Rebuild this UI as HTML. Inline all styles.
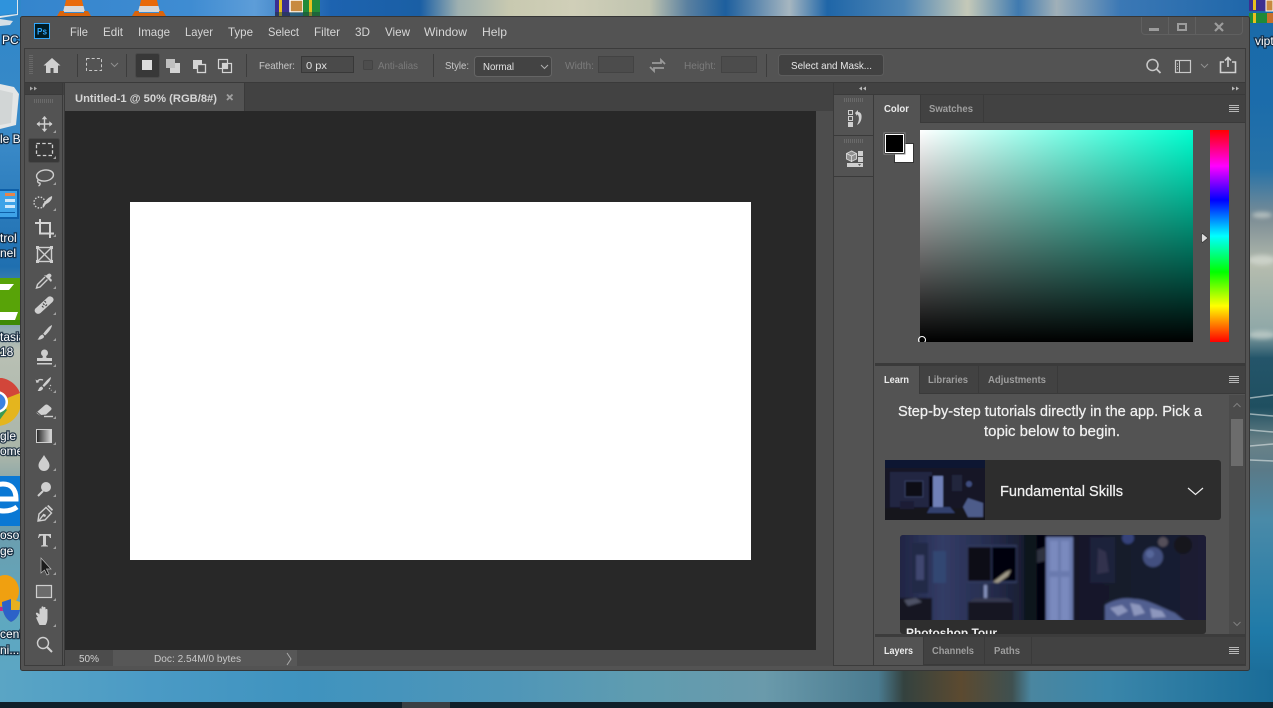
<!DOCTYPE html>
<html><head><meta charset="utf-8"><title>Photoshop</title>
<style>
html,body{margin:0;padding:0;background:#1a6aa8;overflow:hidden;width:1273px;height:708px}
svg{display:block;font-family:"Liberation Sans",sans-serif}
.m{font-size:12px;fill:#d6d6d6}
.o{font-size:10.5px;fill:#c8c8c8}
.d{font-size:10.5px;fill:#7b7b7b}
.ta{font-size:10px;font-weight:bold;fill:#ececec}
.ti{font-size:10px;font-weight:bold;fill:#9e9e9e}
.dt{font-size:12px;fill:#fff;paint-order:stroke;stroke:#10243a;stroke-width:2.500px;stroke-opacity:.85}
.lt{font-size:15px;fill:#f0f0f0;stroke:#f0f0f0;stroke-width:.25px}
.i{fill:none;stroke:#cfcfcf;stroke-width:1.4}
.f{fill:#cfcfcf}
.l{stroke:#3a3a3a;stroke-width:1}
</style></head><body>
<svg width="1273" height="708" viewBox="0 0 1273 708" xmlns="http://www.w3.org/2000/svg">
<defs>
<linearGradient id="gt"><stop offset="0" stop-color="#3384cc"/><stop offset=".15" stop-color="#3f8cd2"/><stop offset=".2" stop-color="#5d9dd8"/><stop offset=".26" stop-color="#1d63b0"/><stop offset=".33" stop-color="#1a5fa5"/><stop offset=".36" stop-color="#9eb0b0"/><stop offset=".4" stop-color="#c8c9b0"/><stop offset=".45" stop-color="#d0cfb8"/><stop offset=".51" stop-color="#c0c4b0"/><stop offset=".54" stop-color="#5a80a0"/><stop offset=".57" stop-color="#1d5f9e"/><stop offset=".62" stop-color="#a6b6c0"/><stop offset=".65" stop-color="#1f66a8"/><stop offset=".71" stop-color="#4f86b5"/><stop offset=".76" stop-color="#c5c9b8"/><stop offset=".8" stop-color="#3f7ab0"/><stop offset=".83" stop-color="#a0b0b8"/><stop offset=".88" stop-color="#3b78b5"/><stop offset="1" stop-color="#1a64a8"/></linearGradient>
<linearGradient id="gb"><stop offset="0" stop-color="#5aa5c5"/><stop offset=".12" stop-color="#4a9ac5"/><stop offset=".24" stop-color="#3f93bf"/><stop offset=".4" stop-color="#4f96b8"/><stop offset=".5" stop-color="#5f9cb0"/><stop offset=".6" stop-color="#6a9aab"/><stop offset=".69" stop-color="#4a7b90"/><stop offset=".71" stop-color="#34423f"/><stop offset=".755" stop-color="#5c4a30"/><stop offset=".795" stop-color="#3f5050"/><stop offset=".81" stop-color="#4a86a0"/><stop offset=".87" stop-color="#3a86aa"/><stop offset="1" stop-color="#1a6c98"/></linearGradient>
<linearGradient id="gr" x2="0" y2="1"><stop offset="0" stop-color="#1a6aa8"/><stop offset=".14" stop-color="#1b6cab"/><stop offset=".24" stop-color="#2672a8"/><stop offset=".31" stop-color="#7c8d95"/><stop offset=".38" stop-color="#b5bcae"/><stop offset=".47" stop-color="#8fa8a8"/><stop offset=".51" stop-color="#24556a"/><stop offset=".58" stop-color="#1f4f60"/><stop offset=".63" stop-color="#6a8288"/><stop offset=".67" stop-color="#5a7a88"/><stop offset=".74" stop-color="#4a8aa8"/><stop offset=".9" stop-color="#1f7aa8"/><stop offset="1" stop-color="#1a6590"/></linearGradient>
<linearGradient id="gl" x2="0" y2="1"><stop offset="0" stop-color="#2f87c9"/><stop offset=".2" stop-color="#3a8ac8"/><stop offset=".38" stop-color="#1f6fb0"/><stop offset=".5" stop-color="#b9c0b4"/><stop offset=".65" stop-color="#a9b5a9"/><stop offset=".72" stop-color="#6f9aa8"/><stop offset=".88" stop-color="#5fa8c0"/><stop offset="1" stop-color="#5aa5c5"/></linearGradient>
<linearGradient id="hue" x2="0" y2="1"><stop offset="0" stop-color="#f00"/><stop offset=".17" stop-color="#f0f"/><stop offset=".33" stop-color="#00f"/><stop offset=".5" stop-color="#0ff"/><stop offset=".67" stop-color="#0f0"/><stop offset=".83" stop-color="#ff0"/><stop offset="1" stop-color="#f00"/></linearGradient>
<linearGradient id="p1"><stop offset="0" stop-color="#fff"/><stop offset="1" stop-color="#00ffd0"/></linearGradient>
<linearGradient id="p2" x2="0" y2="1"><stop offset="0" stop-color="#000" stop-opacity="0"/><stop offset=".5" stop-color="#000" stop-opacity=".5"/><stop offset="1" stop-color="#000"/></linearGradient>
<linearGradient id="grd"><stop offset="0" stop-color="#222"/><stop offset="1" stop-color="#ddd"/></linearGradient>
<linearGradient id="wall"><stop offset="0" stop-color="#1e2340"/><stop offset=".15" stop-color="#333c66"/><stop offset=".3" stop-color="#262d4e"/><stop offset=".45" stop-color="#131726"/><stop offset=".7" stop-color="#171a2b"/><stop offset="1" stop-color="#1b2035"/></linearGradient>
<filter id="s1" x="-5%" y="-5%" width="110%" height="110%"><feGaussianBlur stdDeviation="1"/></filter>
<filter id="s2" x="-20%" y="-20%" width="140%" height="140%"><feGaussianBlur stdDeviation=".8"/></filter>
<filter id="s3" x="-50%" y="-50%" width="200%" height="200%"><feGaussianBlur stdDeviation="2"/></filter>
<clipPath id="cb"><rect x="900" y="535" width="306" height="99" rx="3"/></clipPath>
<clipPath id="ct"><rect x="885" y="460" width="100" height="60"/></clipPath>
</defs>

<!-- desktop -->
<rect width="1273" height="708" fill="#3a86aa"/>
<rect x="0" y="0" width="1273" height="17" fill="url(#gt)"/>
<rect x="0" y="0" width="21" height="702" fill="url(#gl)"/>
<rect x="1249" y="0" width="24" height="702" fill="url(#gr)"/>
<rect x="0" y="670" width="1273" height="32" fill="url(#gb)"/>
<g filter="url(#s3)" fill="#e4e8e0" opacity=".55">
<ellipse cx="1262" cy="215" rx="10" ry="3"/><ellipse cx="1262" cy="260" rx="14" ry="5"/><ellipse cx="1262" cy="335" rx="14" ry="4"/>
</g>
<path d="M1250 398l23-3M1250 414l23 2M1250 430l23 2M1250 446l23-2M1250 460l23 1" stroke="#dfe6e6" stroke-width="1.500" opacity=".6" fill="none"/>
<rect x="0" y="702" width="1273" height="6" fill="#10202a"/>
<rect x="402" y="702" width="48" height="6" fill="#3a4044"/>

<!-- top icons -->
<path d="M66 0h16l2 9H64z" fill="#e96a0a"/><path d="M64.500 6h19l1.500 6H63z" fill="#d8d8d8"/><path d="M57 16l3-5h4v2h20v-2h4l3 5z" fill="#d9640c"/>
<path d="M141 0h16l2 9h-20z" fill="#e96a0a"/><path d="M139.500 6h19l1.500 6h-22z" fill="#d8d8d8"/><path d="M132 16l3-5h4v2h20v-2h4l3 5z" fill="#d9640c"/>
<rect x="275" y="0" width="15" height="16" fill="#3c2f90"/><rect x="279" y="0" width="3" height="16" fill="#e8c020"/><rect x="290" y="0" width="13" height="12" fill="#c88a40" stroke="#fff" stroke-width="1.500"/><rect x="303" y="0" width="17" height="16" fill="#228a3a"/><rect x="309" y="0" width="3" height="16" fill="#e8c020"/><rect x="275" y="12" width="45" height="4" fill="#1a3f3a" opacity=".5"/>
<!-- left icons -->
<path d="M0 0h17v13L0 15z" fill="#2f93dc"/><path d="M17 0v14L0 16v2l18-3V0z" fill="#dfe7ec"/><path d="M0 19l13 2-3 4-10 1z" fill="#d5dfe6"/>
<text class="dt" x="2" y="44">PC</text>
<path d="M0 84l14 3 5 7-3 31-16 4z" fill="#e4e6e6"/><path d="M0 90l13 3-2 30-11 2z" fill="#d2d6d6"/>
<text class="dt" x="0" y="143">le Bi</text>
<rect x="-2" y="189" width="21" height="30" fill="#0e5fa8"/><rect x="0" y="191" width="17" height="26" fill="#3ea3e8"/><rect x="5" y="193" width="10" height="3" fill="#e8854a"/><rect x="5" y="199" width="10" height="3" fill="#cfe8fa"/><rect x="5" y="205" width="10" height="3" fill="#cfe8fa"/><rect x="0" y="212" width="15" height="1" fill="#0e5fa8"/>
<text class="dt" x="0" y="242">trol</text>
<text class="dt" x="0" y="257">nel</text>
<rect x="0" y="278" width="21" height="47" fill="#58a308"/><path d="M0 284h14l-5 6H0zM0 312h18l-3 8H0z" fill="#fff"/><rect x="0" y="320" width="21" height="5" fill="#3f8a08"/>
<text class="dt" x="0" y="341">tasia</text>
<text class="dt" x="0" y="356">18</text>
<circle cx="-3" cy="402" r="24" fill="#e4b51e"/><path d="M-3 402L-20 378h22A24 24 0 0 1 20 393z" fill="#d2463a"/><path d="M-3 402l10 8-12 16-8-2z" fill="#3a9a52"/><circle cx="-3" cy="402" r="11" fill="#fff"/><circle cx="-3" cy="402" r="8.500" fill="#3b82e0"/>
<text class="dt" x="0" y="440">gle</text>
<text class="dt" x="0" y="455">ome</text>
<rect x="0" y="476" width="21" height="50" fill="#0a78d4"/>
<path d="M-10 499H16C16 488 10 484 3 484C-6 484-11 490-11 498C-11 507-4 511 4 511C9 511 13 510 17 507" fill="none" stroke="#fff" stroke-width="5"/>
<text class="dt" x="0" y="539">osof</text>
<text class="dt" x="0" y="555">ge</text>
<ellipse cx="5" cy="591" rx="14" ry="16" fill="#f0a010"/><path d="M-2 607h20v4H0z" fill="#c62888"/><path d="M2 602l9-3 9 3c0 10-3 17-9 20-6-3-9-10-9-20z" fill="#e8b020"/><path d="M11 599v23c-6-3-9-10-9-20zM11 610h9c-1 5-4 10-9 12z" fill="#2c62c8"/>
<text class="dt" x="0" y="638">cent</text>
<text class="dt" x="0" y="654">ni...</text>
<!-- right icons -->
<rect x="1249" y="0" width="24" height="11" fill="#3c2f90"/><rect x="1249" y="13" width="24" height="10" fill="#1f8a38"/><rect x="1253" y="0" width="3" height="10" fill="#e8c020"/><rect x="1253" y="13" width="3" height="10" fill="#e8c020"/><rect x="1266" y="0" width="7" height="11" fill="#c88a40" stroke="#fff"/><rect x="1267" y="13" width="6" height="10" fill="#c8702a"/>
<text class="dt" x="1255" y="45">vipt</text>

<!-- window -->
<rect x="20.500" y="16.500" width="1229" height="654" rx="2" fill="#535353" stroke="#363636"/>
<rect x="24.500" y="48.500" width="1221" height="617" fill="#535353" stroke="#3c3c3c"/>
<rect x="25" y="83" width="1220" height="12" fill="#424242"/>
<line class="l" x1="25" x2="1245" y1="82.500" y2="82.500"/>

<!-- ps logo -->
<rect x="34.500" y="23.500" width="15" height="15" fill="#001d26" stroke="#31a8ff"/>
<text x="37" y="34.500" font-size="9" font-weight="bold" fill="#31a8ff" textLength="10" lengthAdjust="spacingAndGlyphs">Ps</text>

<!-- menu -->
<text class="m" x="70" y="36" textLength="18" lengthAdjust="spacingAndGlyphs">File</text>
<text class="m" x="103" y="36" textLength="20" lengthAdjust="spacingAndGlyphs">Edit</text>
<text class="m" x="138" y="36" textLength="32" lengthAdjust="spacingAndGlyphs">Image</text>
<text class="m" x="185" y="36" textLength="28" lengthAdjust="spacingAndGlyphs">Layer</text>
<text class="m" x="228" y="36" textLength="25" lengthAdjust="spacingAndGlyphs">Type</text>
<text class="m" x="268" y="36" textLength="31" lengthAdjust="spacingAndGlyphs">Select</text>
<text class="m" x="314" y="36" textLength="26" lengthAdjust="spacingAndGlyphs">Filter</text>
<text class="m" x="355" y="36" textLength="15" lengthAdjust="spacingAndGlyphs">3D</text>
<text class="m" x="385" y="36" textLength="25" lengthAdjust="spacingAndGlyphs">View</text>
<text class="m" x="424" y="36" textLength="43" lengthAdjust="spacingAndGlyphs">Window</text>
<text class="m" x="482" y="36" textLength="25" lengthAdjust="spacingAndGlyphs">Help</text>

<!-- window controls -->
<path d="M1141.500 17v14a3.500 3.500 0 0 0 3.500 3.500h94a3.500 3.500 0 0 0 3.500-3.500V17M1168.500 17v18M1195.500 17v18" fill="none" stroke="#606060"/>
<rect x="1149" y="28" width="10" height="3" fill="#9c9c9c"/>
<rect x="1178" y="24" width="8" height="6" fill="none" stroke="#9c9c9c" stroke-width="2"/>
<path d="M1215 23l8 8M1223 23l-8 8" stroke="#9c9c9c" stroke-width="2.200" fill="none"/>

<!-- options bar -->
<path d="M29 55.500h4M29 57.500h4M29 59.500h4M29 61.500h4M29 63.500h4M29 65.500h4M29 67.500h4M29 69.500h4M29 71.500h4M29 73.500h4" stroke="#686868" stroke-width="1"/>
<path d="M52 58l-8.500 7.500h2.500V73h4.500v-5h3v5H58v-7.500h2.500z" fill="#d0d0d0"/>
<line x1="77.500" x2="77.500" y1="54" y2="77" stroke="#3d3d3d"/>
<rect x="86.500" y="58.500" width="15" height="12" fill="none" stroke="#c8c8c8" stroke-dasharray="3 2.200"/>
<path d="M111 63l3.500 3.500L118 63" fill="none" stroke="#909090"/>
<line x1="126.500" x2="126.500" y1="54" y2="77" stroke="#3d3d3d"/>
<rect x="135.500" y="53.500" width="24" height="24" rx="2" fill="#383838" stroke="#4a4a4a"/>
<rect x="142" y="60" width="10" height="10" fill="#dcdcdc"/>
<path d="M166 59h9v4h5v10h-10v-5h-4z" fill="#d4d4d4"/><path d="M166 59h9v9h-9z" fill="#c0c0c0"/>
<rect x="193" y="60" width="9" height="9" fill="#d4d4d4"/><rect x="197.500" y="64.500" width="8" height="8" fill="#535353" stroke="#d4d4d4" stroke-width="1.300"/>
<rect x="218.500" y="59.500" width="9" height="9" fill="none" stroke="#d4d4d4" stroke-width="1.200"/><rect x="222.500" y="63.500" width="9" height="9" fill="none" stroke="#d4d4d4" stroke-width="1.200"/><rect x="223" y="64" width="4.500" height="4.500" fill="#d4d4d4"/>
<line x1="246.500" x2="246.500" y1="54" y2="77" stroke="#3d3d3d"/>
<text class="o" x="259" y="69" textLength="36" lengthAdjust="spacingAndGlyphs">Feather:</text>
<rect x="301.500" y="56.500" width="52" height="16" fill="#4a4a4a" stroke="#383838"/>
<text class="o" x="306" y="69" textLength="21" lengthAdjust="spacingAndGlyphs" style="fill:#e0e0e0">0 px</text>
<rect x="363.500" y="60.500" width="9" height="9" rx="1" fill="#4d4d4d" stroke="#444"/>
<text class="d" x="378" y="69" textLength="40" lengthAdjust="spacingAndGlyphs">Anti-alias</text>
<line x1="433.500" x2="433.500" y1="54" y2="77" stroke="#3d3d3d"/>
<text class="o" x="445" y="69" textLength="24" lengthAdjust="spacingAndGlyphs">Style:</text>
<rect x="474.500" y="56.500" width="77" height="20" rx="3" fill="#434343" stroke="#656565"/>
<text class="o" x="483" y="70" textLength="31" lengthAdjust="spacingAndGlyphs" style="fill:#e4e4e4">Normal</text>
<path d="M541 65l3.500 3.500L548 65" fill="none" stroke="#b0b0b0"/>
<text class="d" x="565" y="69" textLength="29" lengthAdjust="spacingAndGlyphs">Width:</text>
<rect x="598.500" y="56.500" width="35" height="16" fill="#4c4c4c" stroke="#434343"/>
<path d="M652 63h9v-3l4 4M664 68h-10v3l-4-4" fill="none" stroke="#9a9a9a" stroke-width="1.800"/>
<text class="d" x="684" y="69" textLength="32" lengthAdjust="spacingAndGlyphs">Height:</text>
<rect x="721.500" y="56.500" width="35" height="16" fill="#4c4c4c" stroke="#434343"/>
<line x1="766.500" x2="766.500" y1="54" y2="77" stroke="#3d3d3d"/>
<rect x="778.500" y="54.500" width="105" height="21" rx="3" fill="#414141" stroke="#5c5c5c"/>
<text class="o" x="791" y="69" textLength="81" lengthAdjust="spacingAndGlyphs" style="fill:#e8e8e8">Select and Mask...</text>
<circle cx="1152.500" cy="65" r="5.500" fill="none" stroke="#c8c8c8" stroke-width="1.500"/><path d="M1156.500 69l4 4" stroke="#c8c8c8" stroke-width="1.800"/>
<rect x="1175.500" y="60.500" width="15" height="12" fill="none" stroke="#c8c8c8" stroke-width="1.200"/><path d="M1179.500 60v13" stroke="#c8c8c8"/><path d="M1177 64h1M1177 66.500h1M1177 69h1" stroke="#c8c8c8"/>
<path d="M1201 64l3.500 3.500L1208 64" fill="none" stroke="#909090"/>
<path d="M1224 62h-3.500v10.500h15V62H1232M1228 67V58M1225 60.500l3-3 3 3" fill="none" stroke="#d0d0d0" stroke-width="1.600"/>

<!-- toolbar -->
<rect x="25" y="83" width="37" height="12" fill="#3f3f3f"/>
<line class="l" x1="25" x2="62" y1="94.500" y2="94.500"/>
<path d="M30 86.500l3 2-3 2zM34 86.500l3 2-3 2z" fill="#aaa"/>
<line x1="62.500" x2="62.500" y1="83" y2="666" stroke="#3a3a3a"/>
<path d="M34.500 99v4M36.500 99v4M38.500 99v4M40.500 99v4M42.500 99v4M44.500 99v4M46.500 99v4M48.500 99v4M50.500 99v4M52.500 99v4" stroke="#6a6a6a"/>
<rect x="28.500" y="138.500" width="31" height="24" rx="2" fill="#383838" stroke="#484848"/>

<!-- move -->
<path d="M44.500 116.500v15M37 124h15" class="i"/><path d="M44.500 116l-2.800 3.200h5.600zM44.500 132l-2.800-3.200h5.600zM36.500 124l3.200-2.800v5.600zM52.500 124l-3.200-2.800v5.600z" class="f"/>
<!-- marquee -->
<rect x="36.500" y="143.500" width="16" height="12" fill="none" stroke="#cfcfcf" stroke-width="1.300" stroke-dasharray="3.500 2.200"/>
<!-- lasso -->
<ellipse cx="45" cy="175.500" rx="8.500" ry="5.500" transform="rotate(-8 45 175.500)" class="i"/><path d="M38.500 179c-2 3 0 4 1 4s1 2-1 3" class="i"/>
<!-- quick select -->
<circle cx="39.500" cy="202.500" r="5.500" fill="none" stroke="#cfcfcf" stroke-width="1.400" stroke-dasharray="1.500 1.500"/><path d="M52 196c1 3-3 7-6 8l-3 4c-1-2 0-5 2-6 1-2 4-5 7-6z" class="f"/>
<!-- crop -->
<path d="M35 223h5M40 219v14.500h14M40 223h10v10.500M50 233.500v4.500" fill="none" stroke="#d4d4d4" stroke-width="2"/>
<!-- frame -->
<rect x="37.500" y="247.500" width="14" height="14" class="i"/><path d="M37.500 247.500l14 14M51.500 247.500l-14 14" class="i" stroke-width="1"/><rect x="36" y="246" width="3" height="3" class="f"/><rect x="50" y="246" width="3" height="3" class="f"/><rect x="36" y="260" width="3" height="3" class="f"/><rect x="50" y="260" width="3" height="3" class="f"/>
<!-- eyedropper -->
<path d="M45 277l-7.500 7.500-1 3.500 3.500-1 7.500-7.500" class="i"/><path d="M44 275l7 7 1-2-2-2 1.500-2c0-2-2-3-3.500-2l-2 1.500z" class="f"/>
<!-- healing -->
<path d="M36 308l12-11c2-1.500 5 0 5.500 2 .3 1-.2 2-1 3l-12 11c-2 1.500-4 .8-5-.5-1.300-1.300-1-3.500.5-4.500z" class="f"/><path d="M43 303.500l1.500 1.500M45.500 306l1.500-1.500M42 306l1.500 1.500M44.500 301l1.500 1.500" stroke="#444" stroke-width="1.200"/>
<!-- brush -->
<path d="M52 325c0 3-4 8-7 10.500l-1.800-1.800c2.500-3.200 5.800-7.500 8.800-8.700z" class="f"/><path d="M42.500 334.500c1 .5 1.500 1.500 1.500 2.500-1 2-4.500 3-6.500 2.500 1.500-1 1.500-4 5-5z" class="f"/>
<!-- stamp -->
<circle cx="44.500" cy="353" r="3.500" class="f"/><path d="M43 355h3l.5 3H52v3H37v-3h5.500z" class="f"/><rect x="37" y="363" width="15" height="1.500" class="f"/>
<!-- history brush -->
<path d="M51 377c0 4-5 8-7 10l-1.500-1.500c2-2.500 5.500-7 8.500-8.500zM41.500 386.500c1 .3 1.500 1.200 1.500 2.200-1 2-3.500 2.700-5.500 2.200 1.500-1 1-3.500 4-4.400z" class="f"/><path d="M37 382c1-2 3-3 6-2" class="i"/><path d="M35.500 379.500l1 3.500 3-1z" class="f"/><path d="M50 385l1 1M49 388l1 1M51 390l.5.5" stroke="#cfcfcf"/>
<!-- eraser -->
<path d="M37 412l8-7c1-.7 2-.7 3 0l3 2.500c.7.8.7 1.700 0 2.500l-6 5.500h-5l-3-2c-.5-.5-.5-1 0-1.500z" class="f"/><path d="M37 412l4 3.500 5.500-.5" fill="none" stroke="#535353"/><path d="M44 416.500h9" class="i"/>
<!-- gradient -->
<rect x="36.500" y="429.500" width="15" height="13" fill="url(#grd)" stroke="#cfcfcf"/>
<!-- drop -->
<path d="M44 455c2 4 5.500 6.500 5.500 10.500a5.500 5.500 0 0 1-11 0c0-4 3.500-6.500 5.500-10.500z" class="f"/>
<!-- dodge -->
<circle cx="46" cy="487" r="5" class="f"/><path d="M43 491l-5 5" stroke="#cfcfcf" stroke-width="2"/>
<!-- pen -->
<path d="M38 521l1-7 7-6.500 5.500 5.500-6.500 7z" class="i"/><path d="M44 514l-5 6.500" class="i" stroke-width="1"/><path d="M47 506l5 5 1-1.500-4.500-4.500z" class="f"/><circle cx="44.500" cy="515.500" r="1.300" class="f"/>
<!-- T -->
<path d="M39 535h12v4h-1c-.5-1.500-1-2.300-3-2.300h-1V546l2 .8v.7h-7v-.7l2-.8v-9.300h-1c-2 0-2.500.8-3 2.300h-1z" class="f" transform="translate(0 -1)"/>
<!-- path select -->
<path d="M41 558v15l3.500-3 2.500 5 2-1-2.500-5H51z" fill="#1c1c1c" stroke="#bdbdbd" stroke-width=".7"/>
<!-- rect -->
<rect x="36.500" y="585.500" width="15" height="12" fill="#6b6b6b" stroke="#cfcfcf" stroke-width="1.200"/>
<!-- hand -->
<path d="M38 617c-1-1.500-2.500-3-2-4 1-1 2.500.5 3.500 1.500v-5c0-1.500 2 -1.500 2 0v3-5c0-1.500 2-1.500 2 0v5-4.500c0-1.500 2-1.500 2 0v5-3c0-1.500 2-1.500 2 0v8c0 3-1 6-2 7h-6c-1-2-2-4-3.500-7.500z" class="f"/>
<!-- zoom -->
<circle cx="43" cy="643" r="5.500" class="i" stroke-width="1.500"/><path d="M47 647l5 5" stroke="#cfcfcf" stroke-width="2"/>
<!-- tool corners -->
<path d="M56 130v3h-3zM56 156v3h-3zM56 182v3h-3zM56 208v3h-3zM56 234v3h-3zM56 286v3h-3zM56 312v3h-3zM56 338v3h-3zM56 364v3h-3zM56 390v3h-3zM56 416v3h-3zM56 442v3h-3zM56 468v3h-3zM56 494v3h-3zM56 520v3h-3zM56 546v3h-3zM56 572v3h-3zM56 598v3h-3zM56 624v3h-3z" fill="#a0a0a0"/>

<!-- doc tab area -->
<rect x="65" y="83" width="768" height="28" fill="#424242"/>
<rect x="65" y="83" width="179" height="28" fill="#535353"/>
<line x1="244.500" x2="244.500" y1="83" y2="111" stroke="#3a3a3a"/>
<text x="75" y="102" font-size="11" font-weight="bold" fill="#d6d6d6" textLength="142" lengthAdjust="spacingAndGlyphs">Untitled-1 @ 50% (RGB/8#)</text>
<path d="M227 94.500l5.500 5.500M232.500 94.500l-5.500 5.500" stroke="#a0a0a0" stroke-width="1.800"/>
<rect x="65" y="111" width="751" height="539" fill="#282828"/>
<rect x="816" y="111" width="17" height="539" fill="#4d4d4d"/>
<rect x="130" y="202" width="621" height="358" fill="#fff"/>
<rect x="65" y="650" width="768" height="16" fill="#4c4c4c"/>
<rect x="113" y="650" width="184" height="16" fill="#575757"/>
<text x="79" y="662" font-size="10" fill="#d0d0d0" textLength="20" lengthAdjust="spacingAndGlyphs">50%</text>
<text x="154" y="662" font-size="10" fill="#c8c8c8" textLength="87" lengthAdjust="spacingAndGlyphs">Doc: 2.54M/0 bytes</text>
<path d="M287 653l4 6-4 6" fill="none" stroke="#aaa"/>
<line x1="64.500" x2="64.500" y1="83" y2="666" stroke="#3a3a3a"/>
<line x1="833.500" x2="833.500" y1="83" y2="666" stroke="#3a3a3a"/>

<!-- collapsed dock -->
<rect x="834" y="83" width="411" height="12" fill="#424242"/>
<path d="M862 86.500l-3 2 3 2zM866 86.500l-3 2 3 2z" fill="#bbb"/>
<path d="M1232 86.500l3 2-3 2zM1236 86.500l3 2-3 2z" fill="#bbb"/>
<line x1="834" x2="1245" y1="94.500" y2="94.500" stroke="#3a3a3a"/>
<path d="M844.500 98v4M846.500 98v4M848.500 98v4M850.500 98v4M852.500 98v4M854.500 98v4M856.500 98v4M858.500 98v4M860.500 98v4M862.500 98v4" stroke="#6a6a6a"/>
<rect x="848.500" y="110.500" width="4" height="4" fill="none" stroke="#cfcfcf"/><rect x="848.500" y="116.500" width="4" height="4" fill="none" stroke="#cfcfcf"/><rect x="848" y="122" width="5" height="5" fill="#cfcfcf"/>
<path d="M855 113l3-3v2c3 0 4 3 3.500 6-.3 3-2 6-4.500 7 1.500-3 2.500-6 1.500-9-.3-1-1-1.500-1.500-1.500v1.500z" fill="#cfcfcf"/>
<line x1="834" x2="873" y1="135.500" y2="135.500" stroke="#3a3a3a"/>
<path d="M844.500 139v4M846.500 139v4M848.500 139v4M850.500 139v4M852.500 139v4M854.500 139v4M856.500 139v4M858.500 139v4M860.500 139v4M862.500 139v4" stroke="#6a6a6a"/>
<path d="M851.500 151l5 2.500v5.500l-5 2.500-5-2.500v-5.500z" fill="#8f8f8f" stroke="#cfcfcf"/><path d="M846.500 153.500l5 2.500 5-2.500M851.500 156v6" fill="none" stroke="#e0e0e0" stroke-width=".8"/>
<rect x="858" y="151" width="5" height="5" fill="#cfcfcf"/><rect x="858" y="157" width="5" height="5" fill="#cfcfcf"/>
<rect x="847" y="163" width="16" height="4" fill="#cfcfcf"/><path d="M858 164h3l-1.500 2z" fill="#555"/>
<line x1="834" x2="873" y1="176.500" y2="176.500" stroke="#3a3a3a"/>
<line x1="873.500" x2="873.500" y1="95" y2="666" stroke="#3a3a3a"/>

<!-- color panel -->
<rect x="875" y="95" width="370" height="28" fill="#424242"/>
<rect x="875" y="95" width="45" height="28" fill="#535353"/>
<path d="M920.500 95v28M983.500 95v28" stroke="#3a3a3a"/>
<line x1="920" x2="1245" y1="122.500" y2="122.500" stroke="#3a3a3a"/>
<text class="ta" x="884" y="112" textLength="25" lengthAdjust="spacingAndGlyphs">Color</text>
<text class="ti" x="929" y="112" textLength="44" lengthAdjust="spacingAndGlyphs">Swatches</text>
<path d="M1229 105.500h10M1229 107.500h10M1229 109.500h10M1229 111.500h10" stroke="#b8b8b8"/>
<rect x="894.500" y="143.500" width="19" height="19" fill="#fff" stroke="#333"/>
<rect x="884" y="133" width="21" height="21" fill="#000" stroke="#8a8a8a"/><rect x="885.500" y="134.500" width="18" height="18" fill="#000" stroke="#fff"/>
<rect x="920" y="130" width="273" height="212" fill="url(#p1)"/>
<rect x="920" y="130" width="273" height="212" fill="url(#p2)"/>
<rect x="1210" y="130" width="19" height="212" fill="url(#hue)"/>
<path d="M1201.500 234.500v7l1 1 5.500-4.500-5.500-4.500z" fill="#ddd" stroke="#333" stroke-width=".7"/>
<circle cx="922" cy="340" r="3.500" fill="none" stroke="#fff" stroke-width="1"/>
<rect x="915" y="342" width="20" height="6" fill="#535353"/>

<!-- sep -->
<rect x="875" y="363" width="370" height="3" fill="#3a3a3a"/>

<!-- learn panel -->
<rect x="875" y="366" width="370" height="28" fill="#424242"/>
<rect x="875" y="366" width="44" height="28" fill="#535353"/>
<path d="M919.500 366v28M978.500 366v27M1057.500 366v27" stroke="#3a3a3a"/>
<line x1="920" x2="1245" y1="393.500" y2="393.500" stroke="#3a3a3a"/>
<text class="ta" x="884" y="383" textLength="25" lengthAdjust="spacingAndGlyphs">Learn</text>
<text class="ti" x="928" y="383" textLength="40" lengthAdjust="spacingAndGlyphs">Libraries</text>
<text class="ti" x="988" y="383" textLength="58" lengthAdjust="spacingAndGlyphs">Adjustments</text>
<path d="M1229 376.500h10M1229 378.500h10M1229 380.500h10M1229 382.500h10" stroke="#b8b8b8"/>
<rect x="875" y="394" width="370" height="240" fill="#535353"/>
<rect x="1229" y="395" width="16" height="239" fill="#4b4b4b"/>
<rect x="1231" y="419" width="12" height="47" fill="#6c6c6c"/>
<path d="M1233.500 407l3.500-3.500 3.500 3.500M1233.500 622l3.500 3.500 3.500-3.500" fill="none" stroke="#7f7f7f"/>
<text class="lt" x="898" y="416" textLength="304" lengthAdjust="spacingAndGlyphs">Step-by-step tutorials directly in the app. Pick a</text>
<text class="lt" x="984" y="436" textLength="136" lengthAdjust="spacingAndGlyphs">topic below to begin.</text>

<rect x="885" y="460" width="336" height="60" rx="3" fill="#2d2d2d"/>
<g clip-path="url(#ct)"><g filter="url(#s2)">
<rect x="883" y="458" width="104" height="64" fill="#141828"/>
<rect x="883" y="458" width="104" height="10" fill="#0f1630"/>
<rect x="890" y="472" width="42" height="35" fill="#232842"/>
<rect x="905" y="481" width="18" height="16" fill="#0a0c18" stroke="#343c60"/>
<rect x="929" y="476" width="4" height="32" fill="#050508"/>
<rect x="933" y="476" width="10" height="31" fill="#6f80b8"/>
<rect x="952" y="475" width="10" height="16" fill="#23253e"/>
<circle cx="969" cy="484" r="3" fill="#3f4e80"/>
<rect x="883" y="508" width="104" height="14" fill="#12121a"/>
<path d="M968 498l15 5v14h-15l-5-10z" fill="#4e5c8a"/>
<rect x="900" y="501" width="14" height="8" fill="#1c1f34"/>
<path d="M930 507h20l5 6h-28z" fill="#33406e"/>
</g></g>
<path d="M1188 488l7.500 6.500 7.500-6.500" fill="none" stroke="#eee" stroke-width="1.200"/>
<text class="lt" x="1000" y="496" textLength="123" lengthAdjust="spacingAndGlyphs">Fundamental Skills</text>

<g clip-path="url(#cb)">
<rect x="900" y="535" width="306" height="99" fill="#2e2e2e"/>
<svg x="900" y="535" width="306" height="85" viewBox="900 535 306 85">
<g filter="url(#s1)">
<rect x="895" y="530" width="316" height="95" fill="url(#wall)"/>
<rect x="912" y="543" width="16" height="50" fill="#232947"/><rect x="916" y="555" width="8" height="25" fill="#3f4670"/>
<rect x="933" y="551" width="13" height="32" fill="#334772"/>
<rect x="967" y="545" width="50" height="38" fill="#333a5e"/><rect x="968" y="547" width="23" height="34" fill="#0a0c18"/><rect x="992" y="547" width="24" height="34" fill="#06060e"/>
<path d="M993 582l13-10 5-2-3 6-10 7z" fill="#a09a88"/>
<rect x="984" y="585" width="3" height="14" fill="#8894c0"/>
<rect x="968" y="602" width="45" height="22" fill="#151622"/><path d="M968 602h45l-6-4h-32z" fill="#343850"/>
<rect x="895" y="598" width="37" height="26" fill="#161824"/><path d="M904 600l12-2 6 4-14 4z" fill="#a0a8c8" opacity=".4"/>
<rect x="1024" y="530" width="13" height="95" fill="#10121e"/>
<rect x="1037" y="535" width="9" height="90" fill="#05060c"/><path d="M1037 550l8-3v14l-8 2z" fill="#2d3040"/>
<rect x="1046" y="537" width="27" height="88" fill="#6a7aae"/>
<rect x="1050" y="541" width="8" height="30" fill="#7a8abe"/><rect x="1061" y="541" width="8" height="30" fill="#7a8abe"/><rect x="1050" y="577" width="8" height="44" fill="#7a8abe"/><rect x="1061" y="577" width="8" height="44" fill="#7a8abe"/>
<rect x="1090" y="537" width="25" height="46" fill="#1f243a"/><path d="M1098 548l8 4 3 20-12 2z" fill="#32324e"/>
<circle cx="1153" cy="557" r="10" fill="#42507f"/><circle cx="1150" cy="554" r="4" fill="#57669a"/>
<circle cx="1163" cy="542" r="5" fill="#544f5a"/>
<circle cx="1128" cy="538" r="6" fill="#34427a"/>
<circle cx="1183" cy="545" r="9" fill="#12141c"/>
<path d="M1105 605c10-6 20-8 30-6 12 0 25 8 40 14l12 10h-82z" fill="#515e90"/>
<path d="M1110 608l12-3 6 6-10 5zM1130 603l10 2 5 8-11 3zM1150 608l12 3 4 6-14 1z" fill="#8d97bd"/>
</g>
</svg>
<text x="906" y="637" font-size="11.500" font-weight="bold" fill="#eee" textLength="91" lengthAdjust="spacingAndGlyphs">Photoshop Tour</text>
</g>
<rect x="875" y="634" width="370" height="3" fill="#3c3c3c"/>

<!-- layers panel -->
<rect x="875" y="637" width="370" height="28" fill="#424242"/>
<rect x="875" y="637" width="48" height="28" fill="#535353"/>
<path d="M923.500 637v28M984.500 637v27M1031.500 637v27" stroke="#3a3a3a"/>
<line x1="923" x2="1245" y1="664.500" y2="664.500" stroke="#3a3a3a"/>
<text class="ta" x="884" y="654" textLength="29" lengthAdjust="spacingAndGlyphs">Layers</text>
<text class="ti" x="932" y="654" textLength="42" lengthAdjust="spacingAndGlyphs">Channels</text>
<text class="ti" x="994" y="654" textLength="26" lengthAdjust="spacingAndGlyphs">Paths</text>
<path d="M1229 647.500h10M1229 649.500h10M1229 651.500h10M1229 653.500h10" stroke="#b8b8b8"/>
</svg>
</body></html>
